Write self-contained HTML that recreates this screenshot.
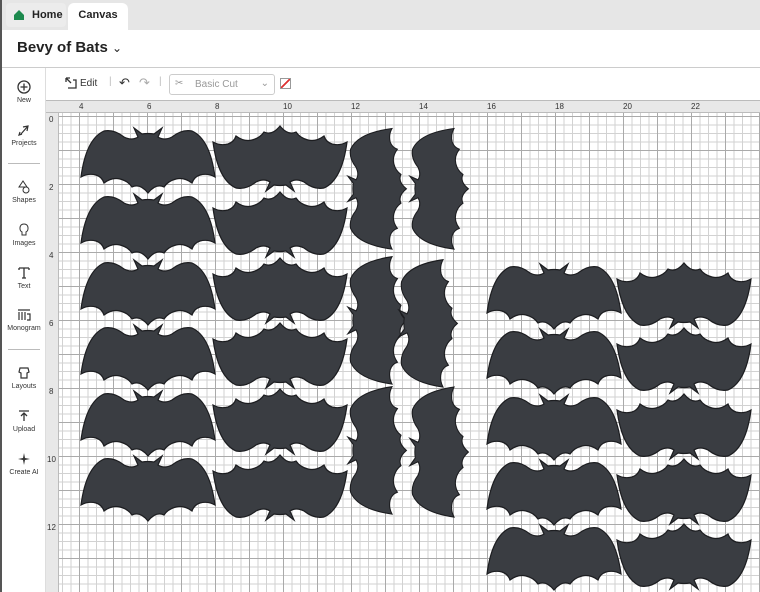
<!DOCTYPE html>
<html><head><style>
*{margin:0;padding:0;box-sizing:border-box}
body{width:760px;height:592px;overflow:hidden;background:#fff;font-family:"Liberation Sans",sans-serif;position:relative;border-left:2px solid #555}
.tabs{position:absolute;left:0;top:0;width:760px;height:30px;background:#e6e6e6}
.tab1{position:absolute;left:4px;top:3px;width:60px;height:24px;background:#ececec;border-radius:4px;font-size:11px;font-weight:bold;color:#222}
.tab2{position:absolute;left:66px;top:3px;width:60px;height:27px;background:#fff;border-radius:6px 6px 0 0;font-size:11px;font-weight:bold;color:#222;text-align:center;line-height:24px}
.title{position:absolute;left:15px;top:39px;font-size:15px;font-weight:bold;color:#222}
.hline{position:absolute;left:0;top:67px;width:760px;height:1px;background:#ccc}
.side{position:absolute;left:0;top:68px;width:44px;height:524px;background:#fff;border-right:1px solid #ddd}
.si{position:absolute;left:0;width:44px;text-align:center;font-size:7px;color:#333}
.si svg{display:block;margin:0 auto 3px}
.sep{position:absolute;left:6px;width:32px;height:1px;background:#bbb}
.tool{position:absolute;left:44px;top:68px;width:716px;height:32px;background:#fff;font-size:10px;color:#333}
.rt{position:absolute;left:44px;top:100px;width:716px;height:13px;background:#e8e8e8;border-bottom:1px solid #bbb;border-top:1px solid #bbb}
.rl{position:absolute;left:44px;top:113px;width:13px;height:479px;background:#e8e8e8;border-right:1px solid #bbb}
.canvas{position:absolute;left:57px;top:113px;width:703px;height:479px;background-color:#fff;
background-image:
linear-gradient(90deg,#aaa 1px,transparent 1px),
linear-gradient(180deg,#aaa 1px,transparent 1px),
linear-gradient(90deg,#d2d2d2 1px,transparent 1px),
linear-gradient(180deg,#d2d2d2 1px,transparent 1px);
background-size:34px 34px,34px 34px,8.5px 8.5px,8.5px 8.5px;
background-position:20px 0,0 3px,20px 0,0 3px}
.lab{position:absolute;font-size:8px;color:#333}
</style></head><body>
<div class="tabs">
<div class="tab1"><svg width="12" height="12" style="position:absolute;left:7px;top:6px"><path d="M1 6 L6 1 L11 6 V11 H1Z" fill="#1d8a4e"/></svg><span style="position:absolute;left:26px;top:6px">Home</span></div>
<div class="tab2">Canvas</div>
</div>
<div class="title">Bevy of Bats <span style="font-weight:normal;font-size:12px">&#8964;</span></div>
<div class="hline"></div>
<div class="side">
<div class="si" style="top:12px"><svg width="14" height="14"><circle cx="7" cy="7" r="6" fill="none" stroke="#333" stroke-width="1.3"/><path d="M7 3.5V10.5M3.5 7H10.5" stroke="#333" stroke-width="1.3"/></svg>New</div>
<div class="si" style="top:55px"><svg width="14" height="14"><path d="M4 11 L11 3 M6 4 L11 3 L10 8 M3 9 L2 12 L5 11" stroke="#333" fill="none" stroke-width="1.2"/></svg>Projects</div>
<div class="sep" style="top:95px"></div>
<div class="si" style="top:112px"><svg width="14" height="14"><path d="M6 1 L10 7 H2Z" fill="none" stroke="#333"/><circle cx="9" cy="10" r="3" fill="none" stroke="#333"/></svg>Shapes</div>
<div class="si" style="top:155px"><svg width="14" height="14"><path d="M7 1 C2 1 2 8 5 9 V12 H9 V9 C12 8 12 1 7 1Z" fill="none" stroke="#333"/></svg>Images</div>
<div class="si" style="top:198px"><svg width="14" height="14"><path d="M2 2 H12 M7 2 V12 M5 12 H9 M2 2 V4 M12 2 V4" stroke="#333" fill="none" stroke-width="1.3"/></svg>Text</div>
<div class="si" style="top:240px"><svg width="14" height="14"><path d="M1 2 H13 M2 4 V12 M5 4 V12 M8 4 V12 M10 6 H13 V12 H10" stroke="#333" fill="none" stroke-width="1.2"/></svg>Monogram</div>
<div class="sep" style="top:281px"></div>
<div class="si" style="top:298px"><svg width="14" height="14"><path d="M3 2 H11 L12 6 L10 7 V12 H4 V7 L2 6Z" fill="none" stroke="#333" stroke-width="1.2"/></svg>Layouts</div>
<div class="si" style="top:341px"><svg width="14" height="14"><path d="M2 2 H12 M7 12 V4 M4 7 L7 4 L10 7" stroke="#333" fill="none" stroke-width="1.3"/></svg>Upload</div>
<div class="si" style="top:384px"><svg width="14" height="14"><path d="M7 1 L8 6 L13 7 L8 8 L7 13 L6 8 L1 7 L6 6Z" fill="#333"/></svg>Create AI</div>
</div>
<div class="tool">
<svg width="14" height="14" style="position:absolute;left:18px;top:8px"><path d="M2 2 L7 7 M2 2 V6 M2 2 H6 M4 12 H12 V4 H9" stroke="#333" fill="none" stroke-width="1.3"/></svg>
<span style="position:absolute;left:34px;top:10px">Edit</span>
<span style="position:absolute;left:63px;top:8px;color:#bbb">|</span>
<span style="position:absolute;left:73px;top:7px;font-size:13px">&#8630;</span>
<span style="position:absolute;left:93px;top:7px;font-size:13px;color:#aaa">&#8631;</span>
<span style="position:absolute;left:113px;top:8px;color:#bbb">|</span>
<div style="position:absolute;left:123px;top:6px;width:106px;height:21px;border:1px solid #ccc;border-radius:3px;color:#999"><span style="position:absolute;left:5px;top:3px">&#9986;</span><span style="position:absolute;left:25px;top:4px">Basic Cut</span><span style="position:absolute;right:5px;top:3px">&#8964;</span></div>
<div style="position:absolute;left:234px;top:10px;width:11px;height:11px;border:1px solid #999;background:linear-gradient(135deg,transparent 44%,#d33 44%,#d33 58%,transparent 58%)"></div>
</div>
<div class="rt">
<span class="lab" style="left:33px;top:1px">4</span><span class="lab" style="left:101px;top:1px">6</span><span class="lab" style="left:169px;top:1px">8</span><span class="lab" style="left:237px;top:1px">10</span><span class="lab" style="left:305px;top:1px">12</span><span class="lab" style="left:373px;top:1px">14</span><span class="lab" style="left:441px;top:1px">16</span><span class="lab" style="left:509px;top:1px">18</span><span class="lab" style="left:577px;top:1px">20</span><span class="lab" style="left:645px;top:1px">22</span>
</div>
<div class="rl">
<span class="lab" style="left:3px;top:2px">0</span><span class="lab" style="left:3px;top:70px">2</span><span class="lab" style="left:3px;top:138px">4</span><span class="lab" style="left:3px;top:206px">6</span><span class="lab" style="left:3px;top:274px">8</span><span class="lab" style="left:1px;top:342px">10</span><span class="lab" style="left:1px;top:410px">12</span>
</div>
<div class="canvas"></div>
<svg width="760" height="592" style="position:absolute;left:0;top:0">
<defs>
<path id="b" d="M58 10 L54 1 L62 7 Q68 6 74 7 L82 1 L78 10 Q84 14 92 10 Q102 2 112 4 Q130 12 135 50 Q128 46 120 48 Q114 50 112 56 Q104 50 96 52 Q88 54 84 60 Q76 56 68 66 Q60 56 52 60 Q48 54 40 52 Q32 50 24 56 Q22 50 16 48 Q8 46 1 50 Q6 12 24 4 Q34 2 44 10 Q52 14 58 10 Z" fill="#3a3d42" stroke="#1c1d20" stroke-width="1.2"/>
</defs>
<g>
<use href="#b" transform="translate(78,127)"/><use href="#b" transform="translate(78,193)"/><use href="#b" transform="translate(78,259)"/><use href="#b" transform="translate(78,324)"/><use href="#b" transform="translate(78,390)"/><use href="#b" transform="translate(78,455)"/>
<use href="#b" transform="translate(210,192) scale(1,-1)"/><use href="#b" transform="translate(210,258) scale(1,-1)"/><use href="#b" transform="translate(210,324) scale(1,-1)"/><use href="#b" transform="translate(210,389) scale(1,-1)"/><use href="#b" transform="translate(210,455) scale(1,-1)"/><use href="#b" transform="translate(210,521) scale(1,-1)"/>
<use href="#b" transform="translate(345,250) rotate(-90) scale(0.9,0.9)"/>
<use href="#b" transform="translate(345,385) rotate(-90) scale(0.95,0.9)"/>
<use href="#b" transform="translate(345,515) rotate(-90) scale(0.95,0.9)"/>
<use href="#b" transform="translate(407,250) rotate(-90) scale(0.9,0.9)"/>
<use href="#b" transform="translate(396,388) rotate(-90) scale(0.95,0.9)"/>
<use href="#b" transform="translate(407,518) rotate(-90) scale(0.97,0.9)"/>
<use href="#b" transform="translate(484,263)"/><use href="#b" transform="translate(484,328)"/><use href="#b" transform="translate(484,394)"/><use href="#b" transform="translate(484,459)"/><use href="#b" transform="translate(484,524)"/>
<use href="#b" transform="translate(614,329) scale(1,-1)"/><use href="#b" transform="translate(614,394) scale(1,-1)"/><use href="#b" transform="translate(614,460) scale(1,-1)"/><use href="#b" transform="translate(614,525) scale(1,-1)"/><use href="#b" transform="translate(614,590) scale(1,-1)"/>
</g>
</svg>
</body></html>
